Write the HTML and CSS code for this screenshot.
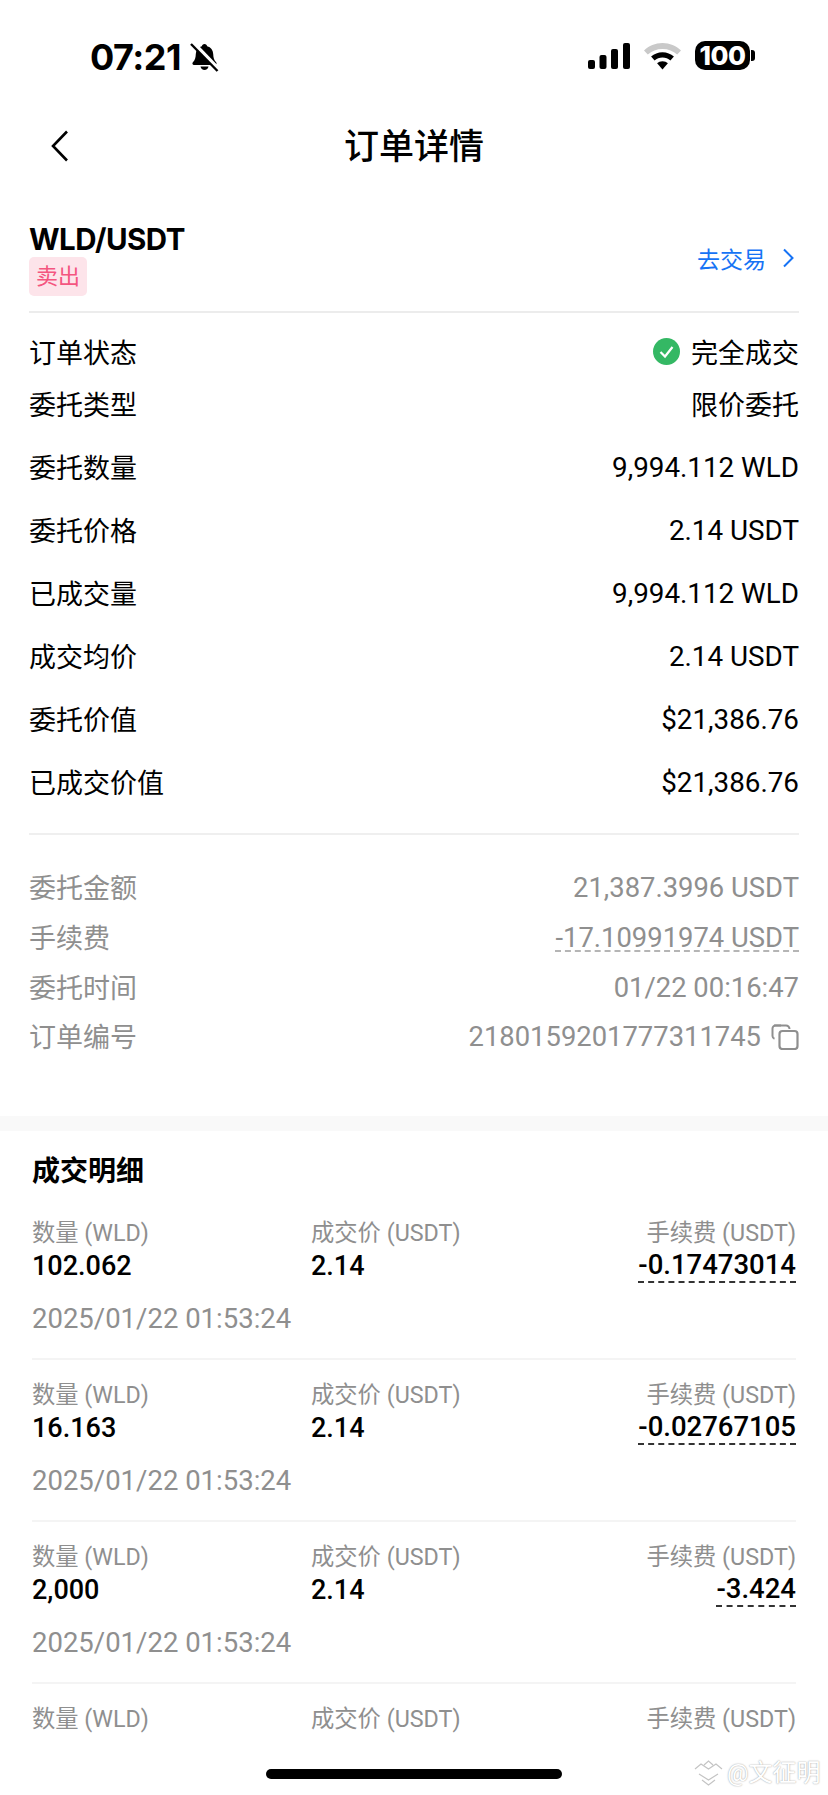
FILE: index.html
```html
<!DOCTYPE html>
<html lang="zh-CN">
<head>
<meta charset="UTF-8">
<meta name="viewport" content="width=device-width, initial-scale=1.0">
<title>订单详情</title>
<link rel="stylesheet" href="styles.css">
</head>
<body>
  <div class="screen">
    <div class="status-bar">
      <div class="status-left">
        <span class="clock">07:21</span>
        <svg class="bell" width="29" height="29" viewBox="0 0 29 29">
          <path d="M14.500 1c1.500 0 2.500 1 2.700 2.300 3.700 1 5.800 4 6 7.700.2 3.600.6 5.900 2.900 8.300 1 1 .4 2.700-1.100 2.700H4c-1.500 0-2.100-1.700-1.100-2.700 2.300-2.400 2.700-4.700 2.900-8.300.2-3.700 2.300-6.700 6-7.700C12 2 13 1 14.500 1z" fill="#000"/>
          <path d="M10.500 23.500h8c-.4 2.300-2 3.500-4 3.500s-3.600-1.200-4-3.500z" fill="#000"/>
          <path d="M3 0 28.500 26.500" stroke="#fff" stroke-width="4.500"/>
          <path d="M1 1 27.500 28" stroke="#000" stroke-width="2.400"/>
        </svg>
      </div>
      <div class="status-right">
        <svg width="42" height="26" viewBox="0 0 42 26">
          <rect x="0" y="17" width="7" height="9" rx="2" fill="#000"/>
          <rect x="11.500" y="12" width="7" height="14" rx="2" fill="#000"/>
          <rect x="23" y="6" width="7" height="20" rx="2" fill="#000"/>
          <rect x="35" y="0" width="7" height="26" rx="2" fill="#000"/>
        </svg>
        <svg class="wifi" width="37" height="27" viewBox="0 0 37 27">
          <path d="M18.500 0C25.800 0 32 2.900 37 7.400l-3.800 4.100C29.300 7.900 24.200 5.900 18.500 5.900S7.700 7.900 3.800 11.500L0 7.400C5 2.900 11.200 0 18.500 0z" fill="#c9c9c9"/>
          <path d="M18.500 9.200c4.400 0 8.300 1.600 11.400 4.400l-3.500 3.800c-2.100-1.900-4.900-3-7.900-3s-5.800 1.100-7.900 3l-3.500-3.800c3.100-2.800 7-4.400 11.400-4.400z" fill="#000"/>
          <path d="M18.500 18.200c2.200 0 4 .8 5.400 2l-5.400 6.300-5.400-6.300c1.400-1.200 3.200-2 5.400-2z" fill="#000"/>
        </svg>
        <div class="battery"><span class="battery-level">100</span><span class="battery-nub"></span></div>
      </div>
    </div>

    <div class="nav-bar">
      <svg class="back-icon" width="20" height="32" viewBox="0 0 20 32">
        <path d="M17 1.500 3 16l14 14.500" fill="none" stroke="#000" stroke-width="2.600"/>
      </svg>
      <h1 class="nav-title">订单详情</h1>
    </div>

    <div class="pair-head">
      <div>
        <div class="pair-name">WLD/USDT</div>
        <span class="side-tag">卖出</span>
      </div>
      <a class="trade-link">去交易
        <svg width="12" height="20" viewBox="0 0 12 20">
          <path d="M2 1.500 10.500 10 2 18.500" fill="none" stroke="#1673f5" stroke-width="2"/>
        </svg>
      </a>
    </div>

    <div class="info-main">
      <div class="row row-tight">
        <span>订单状态</span>
        <span class="status-done">
          <svg width="27" height="27" viewBox="0 0 27 27">
            <circle cx="13.500" cy="13.500" r="13.500" fill="#34b864"/>
            <path d="M7.500 14 12 18.500 19.500 9" fill="none" stroke="#fff" stroke-width="2.200"/>
          </svg>
          完全成交
        </span>
      </div>
      <div class="row row-tight row-type"><span>委托类型</span><span>限价委托</span></div>
      <div class="row"><span>委托数量</span><span class="num">9,994.112 WLD</span></div>
      <div class="row"><span>委托价格</span><span class="num">2.14 USDT</span></div>
      <div class="row"><span>已成交量</span><span class="num">9,994.112 WLD</span></div>
      <div class="row"><span>成交均价</span><span class="num">2.14 USDT</span></div>
      <div class="row"><span>委托价值</span><span class="num">$21,386.76</span></div>
      <div class="row"><span>已成交价值</span><span class="num">$21,386.76</span></div>
    </div>

    <div class="info-extra">
      <div class="row"><span>委托金额</span><span class="num">21,387.3996 USDT</span></div>
      <div class="row"><span>手续费</span><span class="num dashed">-17.10991974 USDT</span></div>
      <div class="row"><span>委托时间</span><span class="num">01/22 00:16:47</span></div>
      <div class="row row-id">
        <span>订单编号</span>
        <span class="num order-id">2180159201777311745
          <svg width="28" height="26" viewBox="0 0 28 26">
            <path d="M10 1.500H4.500a3 3 0 0 0-3 3V12a3 3 0 0 0 2 2.800" fill="none" stroke="#8f8f8f" stroke-width="2"/>
            <path d="M3 1.500h12a3.500 3.500 0 0 1 3.500 3.500" fill="none" stroke="#8f8f8f" stroke-width="2"/>
            <rect x="8.500" y="7" width="18" height="18" rx="3" fill="none" stroke="#8f8f8f" stroke-width="2.200"/>
          </svg>
        </span>
      </div>
    </div>

    <div class="band"></div>

    <div class="fills">
      <h2 class="fills-title">成交明细</h2>

      <div class="fill">
        <div class="fill-grid">
          <div class="fill-col"><span class="fill-label">数量 (WLD)</span><span class="fill-value">102.062</span></div>
          <div class="fill-col"><span class="fill-label">成交价 (USDT)</span><span class="fill-value">2.14</span></div>
          <div class="fill-col fill-end"><span class="fill-label">手续费 (USDT)</span><span class="fill-value fill-fee">-0.17473014</span></div>
        </div>
        <div class="fill-date">2025/01/22 01:53:24</div>
      </div>

      <div class="fill">
        <div class="fill-grid">
          <div class="fill-col"><span class="fill-label">数量 (WLD)</span><span class="fill-value">16.163</span></div>
          <div class="fill-col"><span class="fill-label">成交价 (USDT)</span><span class="fill-value">2.14</span></div>
          <div class="fill-col fill-end"><span class="fill-label">手续费 (USDT)</span><span class="fill-value fill-fee">-0.02767105</span></div>
        </div>
        <div class="fill-date">2025/01/22 01:53:24</div>
      </div>

      <div class="fill">
        <div class="fill-grid">
          <div class="fill-col"><span class="fill-label">数量 (WLD)</span><span class="fill-value">2,000</span></div>
          <div class="fill-col"><span class="fill-label">成交价 (USDT)</span><span class="fill-value">2.14</span></div>
          <div class="fill-col fill-end"><span class="fill-label">手续费 (USDT)</span><span class="fill-value fill-fee">-3.424</span></div>
        </div>
        <div class="fill-date">2025/01/22 01:53:24</div>
      </div>

      <div class="fill">
        <div class="fill-grid">
          <div class="fill-col"><span class="fill-label">数量 (WLD)</span></div>
          <div class="fill-col"><span class="fill-label">成交价 (USDT)</span></div>
          <div class="fill-col fill-end"><span class="fill-label">手续费 (USDT)</span></div>
        </div>
      </div>
    </div>

    <div class="home-bar"></div>

    <div class="watermark">
      <svg width="29" height="26" viewBox="0 0 29 26">
        <path d="M1 9 7 4l7.500 5L22 4l6 5M5 14l9.500 6L24 14M8 20l6.500 5L21 20M10 5l4.500-4L19 5" fill="none" stroke="#c4c4c4" stroke-width="1.200"/>
      </svg>
      <span>@文征明</span>
    </div>
  </div>
</body>
</html>
```

FILE: styles.css
```css
* {
  box-sizing: border-box;
}

body {
  margin: 0;
  background-color: #fff;
  font-family: Roboto, "Noto Sans CJK SC", sans-serif;
  color: #000;
}

.screen {
  position: relative;
  width: 828px;
  height: 1795px;
  overflow: hidden;
  background-color: #fff;
}

/* status bar */
.status-bar {
  height: 100px;
  display: flex;
  justify-content: space-between;
  padding: 41px 78px 0 90px;
}

.status-left {
  display: flex;
  align-items: flex-start;
  gap: 9px;
}

.clock {
  font-family: Inter, sans-serif;
  font-size: 36px;
  font-weight: 700;
  line-height: 32px;
  letter-spacing: -0.5px;
}

.bell {
  margin-top: 2px;
}

.status-right {
  display: flex;
  align-items: flex-start;
  gap: 14px;
}

.status-right svg {
  margin-top: 2px;
}

.battery {
  position: relative;
  width: 55px;
  height: 29px;
  background-color: #000;
  border-radius: 10px;
  display: flex;
  justify-content: center;
  align-items: center;
}

.battery-level {
  font-family: Inter, sans-serif;
  font-size: 26px;
  font-weight: 800;
  color: #fff;
  letter-spacing: -0.5px;
}

.battery-nub {
  position: absolute;
  right: -5px;
  top: 9px;
  width: 4px;
  height: 11px;
  background-color: #000;
  border-radius: 0 3px 3px 0;
}

/* nav */
.nav-bar {
  position: relative;
  height: 90px;
  display: flex;
  align-items: center;
  justify-content: center;
  padding-bottom: 4px;
}

.back-icon {
  position: absolute;
  left: 50px;
  top: 30px;
}

.nav-title {
  margin: 0;
  font-size: 35px;
  font-weight: 500;
}

/* pair header */
.pair-head {
  margin: 0 29px;
  height: 123px;
  padding-top: 31px;
  border-bottom: 2px solid #ececec;
  display: flex;
  justify-content: space-between;
  align-items: flex-start;
}

.pair-name {
  font-family: Inter, sans-serif;
  font-size: 29.5px;
  font-weight: 700;
  line-height: 36px;
  letter-spacing: -0.5px;
}

.side-tag {
  display: block;
  width: 58px;
  height: 39px;
  background-color: #fde4ea;
  border-radius: 5px;
  color: #f4557f;
  font-size: 22px;
  line-height: 39px;
  text-align: center;
}

.trade-link {
  display: flex;
  align-items: center;
  gap: 16px;
  margin-top: 20px;
  padding-right: 5px;
  font-size: 23px;
  color: #1673f5;
}

/* info rows */
.row {
  height: 63px;
  display: flex;
  justify-content: space-between;
  align-items: center;
  font-size: 27px;
}

.num {
  padding-top: 2px;
  font-size: 27.8px;
}

.info-main {
  margin: 0 29px;
  padding: 12px 0 20px;
  border-bottom: 2px solid #efefef;
}

.row-tight {
  height: 52px;
}

.row-type {
  margin-bottom: 6px;
}

.status-done {
  display: flex;
  align-items: center;
  gap: 11px;
}

.info-extra {
  margin: 0 29px;
  padding-top: 26px;
  color: #8f8f8f;
}

.info-extra .row {
  height: 50px;
}

.info-extra .row-id {
  height: 46px;
  padding-top: 2px;
}

.info-extra .num {
  padding-top: 4px;
  font-size: 27.4px;
}

.info-extra .dashed {
  margin-top: 2px;
  padding-top: 0;
  border-bottom: 2px dashed #b5b5b5;
  line-height: 24px;
  transform: translateY(2px);
}

.order-id {
  display: flex;
  align-items: center;
  gap: 10px;
}

.band {
  height: 15px;
  margin-top: 59px;
  background-color: #f9f9f9;
}

/* fills */
.fills {
  padding: 0 32px;
}

.fills-title {
  margin: 0;
  padding-top: 22px;
  height: 67px;
  font-size: 28px;
  font-weight: 700;
  line-height: 38px;
}

.fill {
  height: 162px;
  padding-top: 19px;
  border-bottom: 2px solid #f4f4f4;
}

.fill:last-child {
  border-bottom: none;
}

.fill-grid {
  display: grid;
  grid-template-columns: 279px 1fr auto;
}

.fill-col {
  display: flex;
  flex-direction: column;
  align-items: flex-start;
}

.fill-end {
  align-items: flex-end;
}

.fill-label {
  font-size: 23.3px;
  line-height: 32px;
  color: #8f8f8f;
}

.fill-value {
  font-size: 27px;
  font-weight: 500;
  line-height: 34px;
}

.fill-fee {
  border-bottom: 2px dashed #333;
  font-size: 27.5px;
  line-height: 32px;
}

.fill-date {
  margin-top: 19px;
  font-size: 27.5px;
  line-height: 34px;
  color: #8f8f8f;
}

/* overlays */
.home-bar {
  position: absolute;
  left: 266px;
  top: 1769px;
  width: 296px;
  height: 10px;
  background-color: #000;
  border-radius: 5px;
}

.watermark {
  position: absolute;
  left: 694px;
  top: 1759px;
  display: flex;
  align-items: center;
  gap: 4px;
  font-size: 24px;
  line-height: 28px;
  color: #fff;
  text-shadow: 0 0 1.5px #8a8a8a;
}
```
